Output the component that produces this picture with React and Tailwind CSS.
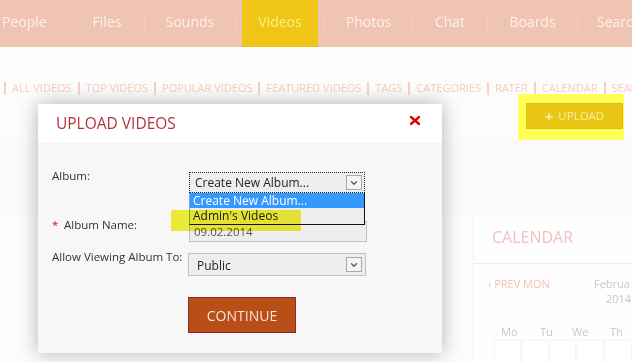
import { ChevronDown } from "lucide-react";

const navItems = [
  { label: "People", w: "w-[69px]", align: "justify-start pl-[2px]" },
  { label: "Files", w: "w-[74px]", align: "justify-center" },
  { label: "Sounds", w: "w-[90px]", align: "justify-center" },
  { label: "Videos", w: "w-[88px]", align: "justify-center", active: true },
  { label: "Photos", w: "w-[87px]", align: "justify-center" },
  { label: "Chat", w: "w-[74px]", align: "justify-center" },
  { label: "Boards", w: "w-[89px]", align: "justify-center" },
  { label: "Search", w: "flex-1", align: "justify-start pl-[19px]" },
];

const subItems = [
  "ALL VIDEOS",
  "TOP VIDEOS",
  "POPULAR VIDEOS",
  "FEATURED VIDEOS",
  "TAGS",
  "CATEGORIES",
  "RATER",
  "CALENDAR",
  "SEARCH",
];

function SelectArrow() {
  return (
    <div className="w-[16px] h-[15px] border border-[#a9a9a9] bg-[#f4f4f4] flex items-center justify-center">
      <ChevronDown size={10} strokeWidth={3} className="text-[#555]" />
    </div>
  );
}

function UploadModal() {
  return (
    <div className="absolute left-[38px] top-[104px] w-[404px] h-[249px] flex flex-col shadow-[0_0_18px_rgba(0,0,0,0.3)]">
      {/* Header */}
      <div className="h-[39px] bg-white flex items-center justify-between pl-[18px] pr-[22px]">
        <span className="text-[15.5px] text-[#b0353b] leading-none pt-[1px]">UPLOAD VIDEOS</span>
        <svg width="10" height="9" viewBox="0 0 10 9" className="mb-[7px]">
          <path d="M1 1 L9 8 M9 1 L1 8" stroke="#e00000" strokeWidth="2.4" strokeLinecap="square" />
        </svg>
      </div>

      {/* Body */}
      <div className="flex-1 bg-[#f7f7f7] pt-[25px] pl-[14px] relative text-[11.5px] text-[#333]">
        <div className="flex h-[25px]">
          <div className="w-[137px] leading-[16px]">Album:</div>
          <div className="mt-[4px] w-[176px] h-[21px] bg-[#eeeeee] border border-dotted border-[#222] flex items-center justify-between pl-[5px] pr-[2px] relative">
            <span className="text-[12px] text-[#222]">Create New Album...</span>
            <SelectArrow />
          </div>
        </div>

        <div className="flex h-[25px] mt-[24px]">
          <div className="w-[137px] leading-[16px] flex">
            <span className="text-[#e01010] w-[12px]">*</span>
            <span>Album Name:</span>
          </div>
          <div className="mt-[4px] w-[178px] h-[21px] bg-[#eeeeee] border border-[#c0c0c0] flex items-center pl-[4px] text-[11.5px] text-[#555]">
            09.02.2014
          </div>
        </div>

        <div className="flex h-[27px] mt-[7px]">
          <div className="w-[136px] leading-[16px]">Allow Viewing Album To:</div>
          <div className="mt-[4px] w-[178px] h-[23px] bg-[#eeeeee] border border-[#c0c0c0] flex items-center justify-between pl-[8px] pr-[3px]">
            <span className="text-[12px] text-[#222] pt-[2px]">Public</span>
            <SelectArrow />
          </div>
        </div>

        <div className="mt-[21px] pl-[136px]">
          <button className="w-[108px] h-[36px] bg-[#b94e18] border border-[#8b2b2b] text-[#f7e4de] text-[14px] flex items-center justify-center">
            CONTINUE
          </button>
        </div>

        {/* Open dropdown list */}
        <div className="absolute left-[151px] top-[50px] w-[176px] h-[32px] border border-[#111] border-l-[#7aa7d8] border-t-0 bg-[#eeeeee] text-[12px]">
          <div className="h-[15px] bg-[#3399ff] text-white pl-[3px] leading-[15px]">Create New Album...</div>
          <div className="h-[15px] text-[#222] pl-[3px] leading-[15px]">Admin's Videos</div>
        </div>

        {/* Marker highlight */}
        <div className="absolute left-[133px] top-[67px] w-[130px] h-[21px] bg-[#f4f23a] mix-blend-multiply" />
      </div>
    </div>
  );
}

function Calendar() {
  return (
    <div className="w-[159px] h-[149px] bg-[#fefefe] border-l border-[#f3f3f3] flex flex-col">
      <div className="h-[51px] border-b border-[#ededed] flex items-center pl-[18px]">
        <span className="text-[16px] text-[#f0c2c2] pb-[4px]">CALENDAR</span>
      </div>
      <div className="flex pt-[12px] text-[11px] h-[62px]">
        <span className="text-[#f2c2b4] pl-[14px] w-[120px]">‹ PREV MON</span>
        <span className="text-[#c8c8c8] leading-[15px] whitespace-nowrap">
          Februa
          <br />
          <span className="pl-[12px]">2014</span>
        </span>
      </div>
      <div className="flex pl-[27px] gap-[18px] text-[11px] text-[#c8c8c8] h-[16px] items-start leading-[14px]">
        <span className="w-[21px]">Mo</span>
        <span className="w-[14px]">Tu</span>
        <span className="w-[20px]">We</span>
        <span className="w-[20px]">Th</span>
      </div>
      <div className="flex pl-[20px] gap-[1px]">
        {[0, 1, 2, 3, 4].map((i) => (
          <div key={i} className="w-[35px] h-[24px] border border-[#f3f3f3] bg-white" />
        ))}
      </div>
    </div>
  );
}

export default function App() {
  return (
    <div
      className="w-[632px] h-[362px] relative overflow-hidden bg-[#fcfcfc]"
      style={{ fontFamily: '"Open Sans", "Liberation Sans", sans-serif' }}
    >
      {/* Top navigation */}
      <nav className="h-[47px] bg-[#efc4b2] flex">
        {navItems.map((item, i) => (
          <div key={item.label} className={`flex items-stretch ${item.w === "flex-1" ? "flex-1" : ""}`}>
            {i > 0 && (
              <div className="w-[1px] flex items-center">
                <div className="w-[1px] h-[18px] bg-[#f1cbbc]" />
              </div>
            )}
            <div className={`${item.w} flex items-stretch ${item.align} whitespace-nowrap`}>
              {item.active ? (
                <div className="mx-[6px] flex-1 bg-[#efc616] flex items-center justify-center pb-[5px] text-[14px] text-[#faf186]">
                  {item.label}
                </div>
              ) : (
                <span className="flex items-center pb-[5px] text-[14px] text-[#fcf0ea]">{item.label}</span>
              )}
            </div>
          </div>
        ))}
      </nav>

      {/* Sub navigation */}
      <div className="mt-[34px] h-[15px] flex items-center pl-[1px] text-[11px] text-[#f6cdbf] whitespace-nowrap">
        {subItems.map((s) => (
          <div key={s} className="flex items-center">
            <span className="w-[2px] h-[13px] bg-[#f6d2c5] mx-[3px]" />
            <span className="px-[3px]">{s}</span>
          </div>
        ))}
      </div>

      {/* Upload button */}
      <div className="flex justify-end pr-[8px] -mt-[2px]">
        <div className="w-[106px] h-[46px] bg-[#ffff55] pl-[8px] pr-[1px] pt-[9px]">
          <button className="w-full h-[26px] bg-[#e9c714] border border-[#e2bd10] flex items-center justify-center gap-[5px] text-[11.5px] text-[#f8eea0]">
            <span className="text-[15px] font-bold leading-none">+</span>
            <span>UPLOAD</span>
          </button>
        </div>
      </div>

      {/* Page band */}
      <div className="h-[75px] bg-[#fafafa]" />

      {/* Content */}
      <div className="flex justify-end">
        <Calendar />
      </div>

      <UploadModal />
    </div>
  );
}
